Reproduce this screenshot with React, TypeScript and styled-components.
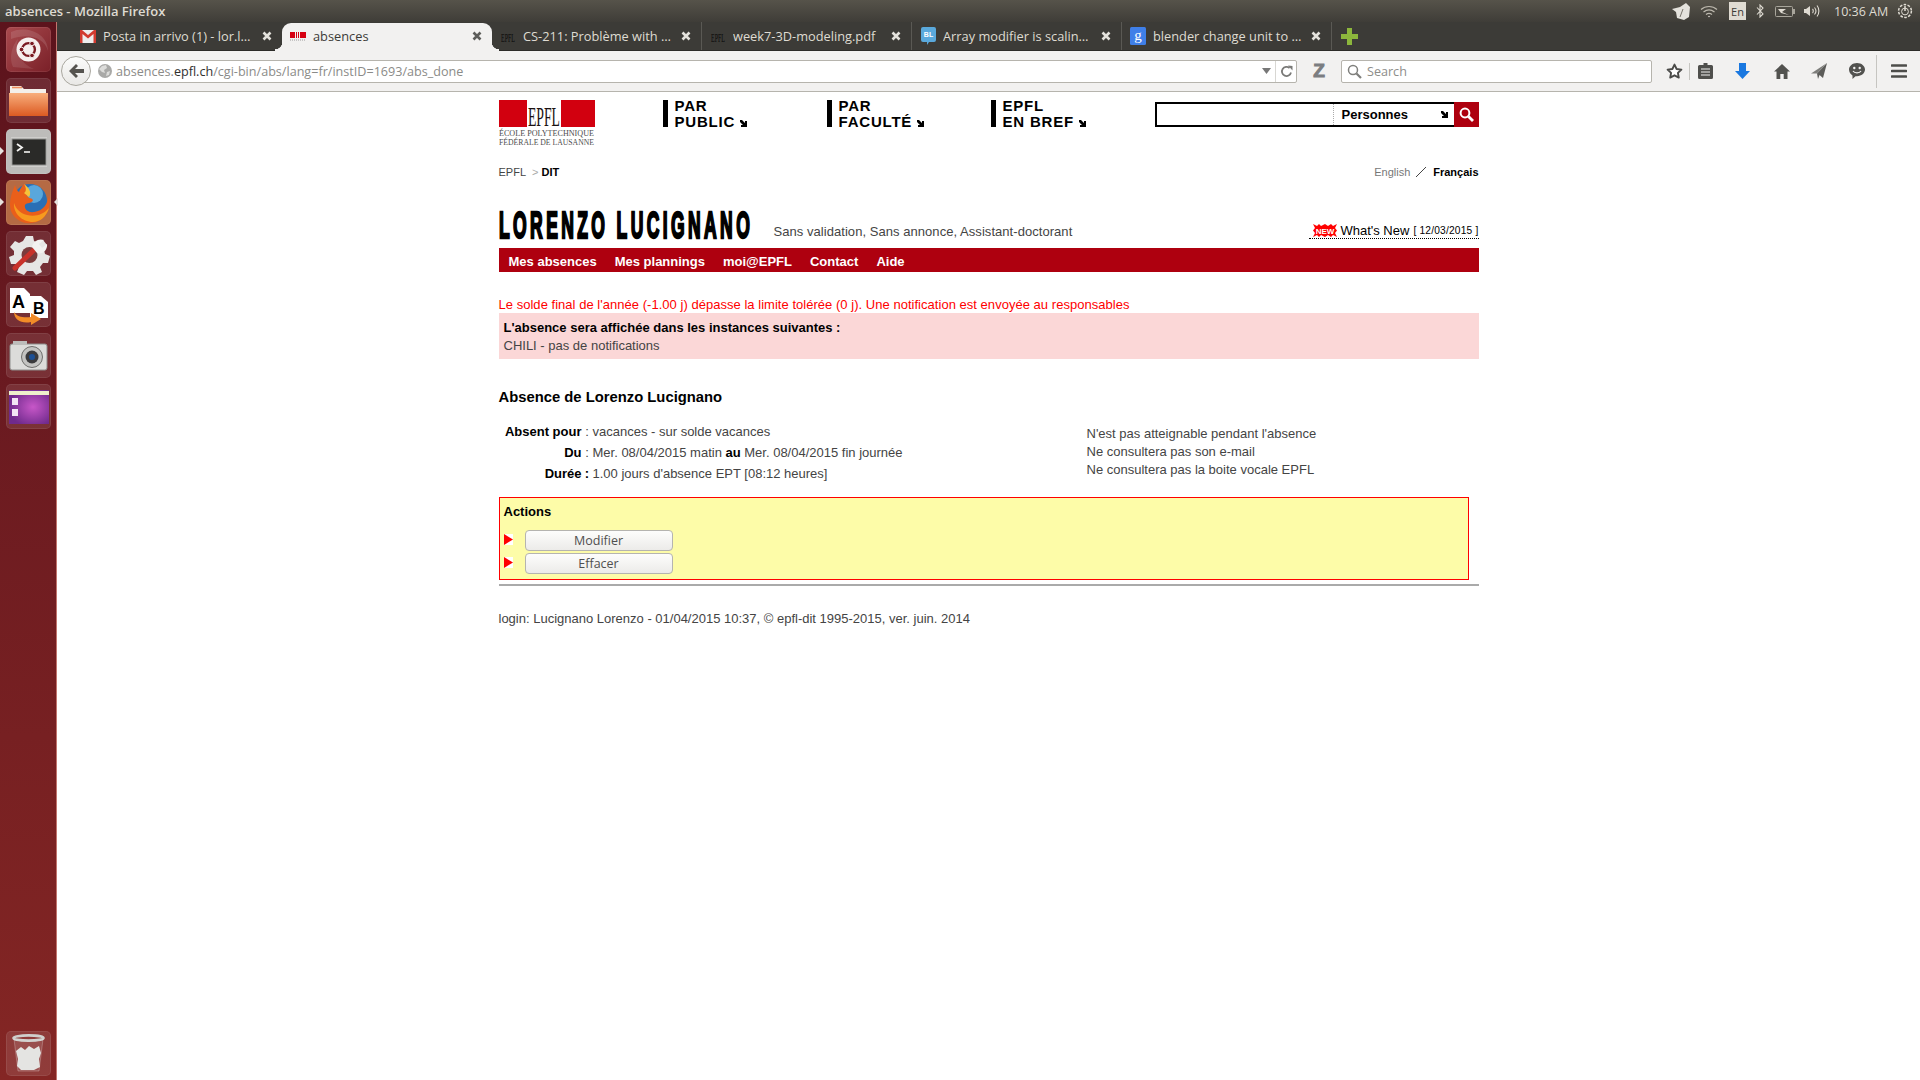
import React from 'react';
import styled, { createGlobalStyle } from 'styled-components';

const GlobalStyle = createGlobalStyle`
  html, body {
    margin: 0;
    padding: 0;
    background: #fff;
    overflow: hidden;
  }
  * {
    box-sizing: border-box;
  }
`;

const uiFont = `"Open Sans", "Noto Sans", sans-serif`;
const pageFont = `"Liberation Sans", Arial, sans-serif`;

const Screen = styled.div`
  width: 1920px;
  height: 1080px;
  display: flex;
  flex-direction: column;
  overflow: hidden;
`;

const TopPanel = styled.div`
  height: 22px;
  flex: none;
  display: flex;
  align-items: center;
  justify-content: space-between;
  padding-left: 5px;
  background: linear-gradient(#56534a, #3f3d38);
  color: #dfdbd2;
  font: 600 13px ${uiFont};
`;

const Tray = styled.div`
  display: flex;
  align-items: center;
  height: 22px;
  padding-right: 7px;
`;

const TrayItem = styled.span<{ $w: number; $ml: number }>`
  width: ${(p) => p.$w}px;
  margin-left: ${(p) => p.$ml}px;
  display: flex;
  align-items: center;
  justify-content: center;
  flex: none;
  height: 18px;
`;

const LangBox = styled(TrayItem)`
  background: #dfdbd2;
  color: #3c3b37;
  font: 400 11px ${uiFont};
`;

const Clock = styled.span`
  width: 54px;
  margin-left: 14px;
  font: 400 12.5px ${uiFont};
  color: #dfdbd2;
  white-space: nowrap;
`;

const Desktop = styled.div`
  flex: 1;
  display: flex;
  min-height: 0;
`;

const Launcher = styled.nav`
  width: 57px;
  flex: none;
  padding: 5px 0 4px 6px;
  display: flex;
  flex-direction: column;
  gap: 6px;
  background: linear-gradient(#5c131c, #6a1a20 35%, #842624);
  border-right: 1px solid #c2756e;
`;

const Tile = styled.div<{ $bg?: string; $push?: boolean }>`
  width: 45px;
  height: 45px;
  flex: none;
  border-radius: 5px;
  background: ${(p) => p.$bg ?? 'rgba(255, 255, 255, 0.1)'};
  box-shadow: inset 0 0 0 1px rgba(255, 255, 255, 0.08);
  margin-top: ${(p) => (p.$push ? 'auto' : '0')};
  position: relative;
  svg {
    display: block;
  }
`;

const Pip = styled.i<{ $side: 'left' | 'right' }>`
  position: absolute;
  top: 18px;
  ${(p) => (p.$side === 'left' ? 'left: -6px;' : 'right: -7px;')}
  width: 0;
  height: 0;
  border-top: 4px solid transparent;
  border-bottom: 4px solid transparent;
  ${(p) =>
    p.$side === 'left' ? 'border-left: 4px solid #e6e2de;' : 'border-right: 4px solid #e6e2de;'}
`;

const Browser = styled.div`
  flex: 1;
  min-width: 0;
  display: flex;
  flex-direction: column;
`;

const TabStrip = styled.div`
  height: 29px;
  flex: none;
  display: flex;
  align-items: stretch;
  padding-left: 15px;
  background: #3c3b37;
  border-bottom: 1px solid #2c2b28;
`;

const Tab = styled.div<{ $active?: boolean; $sep?: boolean }>`
  width: 210px;
  flex: none;
  display: flex;
  align-items: center;
  padding: ${(p) => (p.$active ? '0 10px 2px 8px' : '0 10px 0 8px')};
  position: relative;
  font: 400 12.8px ${uiFont};
  color: ${(p) => (p.$active ? '#3c3b37' : '#dfdbd2')};
  background: ${(p) => (p.$active ? '#f2f1f0' : 'transparent')};
  border-radius: ${(p) => (p.$active ? '9px 9px 0 0' : '0')};
  margin-top: ${(p) => (p.$active ? '1px' : '0')};
  margin-bottom: ${(p) => (p.$active ? '-1px' : '0')};
  border-right: ${(p) => (p.$sep ? '1px solid #5a5954' : '0')};
  ${(p) =>
    p.$active &&
    `
    &::before, &::after {
      content: '';
      position: absolute;
      bottom: 0;
      width: 7px;
      height: 9px;
    }
    &::before {
      left: -7px;
      background: radial-gradient(circle at 0 0, transparent 7px, #f2f1f0 7.5px);
    }
    &::after {
      right: -7px;
      background: radial-gradient(circle at 100% 0, transparent 7px, #f2f1f0 7.5px);
    }
  `}
`;

const TabIcon = styled.span`
  width: 16px;
  height: 16px;
  flex: none;
  margin-right: 7px;
  display: flex;
  align-items: center;
  justify-content: center;
`;

const TabLabel = styled.span`
  flex: 1;
  white-space: nowrap;
  overflow: hidden;
`;

const PlusButton = styled.div`
  display: flex;
  align-items: center;
  margin-left: 9px;
`;

const Toolbar = styled.div`
  height: 41px;
  flex: none;
  display: flex;
  align-items: center;
  padding-left: 4px;
  background: #f2f1f0;
  border-bottom: 1px solid #b6b4ad;
  color: #4a4a4a;
`;

const BackButton = styled.div`
  width: 30px;
  height: 30px;
  flex: none;
  border-radius: 50%;
  background: linear-gradient(#fbfbfa, #e9e8e6);
  border: 1px solid #a9a79f;
  display: flex;
  align-items: center;
  justify-content: center;
  position: relative;
  z-index: 1;
`;

const Field = styled.div`
  height: 23px;
  display: flex;
  align-items: center;
  background: #fff;
  border: 1px solid #b6b4ad;
  border-radius: 2px;
  font: 400 12.6px ${uiFont};
`;

const UrlBar = styled(Field)`
  flex: 1;
  min-width: 0;
  margin-left: -15px;
  padding-left: 21px;
`;

const UrlText = styled.span`
  flex: 1;
  margin-left: 4px;
  color: #8b8b88;
  white-space: nowrap;
  b {
    font-weight: 400;
    color: #2f2f2f;
  }
`;

const ReloadBox = styled.span`
  width: 21px;
  height: 21px;
  display: flex;
  align-items: center;
  justify-content: center;
  margin-left: 4px;
  border-left: 1px solid #d8d7d3;
`;

const AddonMark = styled.span`
  width: 44px;
  flex: none;
  text-align: center;
  font: 700 19px ${pageFont};
  color: #7b7d80;
  -webkit-text-stroke: 1px #7b7d80;
`;

const SearchField = styled(Field)`
  width: 311px;
  flex: none;
  padding-left: 5px;
  color: #8d8d8a;
  gap: 5px;
`;

const ToolIcon = styled.span<{ $w: number; $ml?: number }>`
  width: ${(p) => p.$w}px;
  margin-left: ${(p) => p.$ml ?? 0}px;
  flex: none;
  display: flex;
  align-items: center;
  justify-content: center;
`;

const ToolSep = styled.span<{ $h: number }>`
  width: 1px;
  height: ${(p) => p.$h}px;
  flex: none;
  background: #c6c5c1;
`;

const Page = styled.main`
  flex: 1;
  background: #fff;
  padding-top: 8px;
  font: 400 13px ${pageFont};
  color: #444;
`;

const Wrap = styled.div`
  width: 980px;
  margin: 0 auto;
`;

const Header = styled.header`
  height: 47px;
  display: flex;
  align-items: flex-start;
`;

const Logo = styled.svg`
  width: 96px;
  height: 47px;
  flex: none;
  margin-right: 68px;
`;

const MainLink = styled.a`
  width: 164px;
  height: 27px;
  flex: none;
  border-left: 5px solid #000;
  padding-left: 7px;
  font: 700 15px/16px ${pageFont};
  letter-spacing: 0.8px;
  color: #000;
  white-space: nowrap;
  svg {
    margin-left: 5px;
  }
`;

const MainLinkText = styled.span`
  display: block;
  margin-top: -2px;
`;

const SearchBox = styled.form`
  width: 324px;
  height: 25px;
  margin: 2px 0 0 auto;
  display: flex;
  border: 2px solid #000;
  border-right: 0;
`;

const SearchInput = styled.div`
  width: 177px;
  flex: none;
  border-right: 1px dotted #aaa;
`;

const SearchSelect = styled.div`
  flex: 1;
  display: flex;
  align-items: center;
  padding-left: 8px;
  font: 700 13px ${pageFont};
  color: #000;
  svg {
    margin-left: auto;
    margin-right: 6px;
  }
`;

const SearchGo = styled.button`
  width: 25px;
  height: 25px;
  margin: -2px 0;
  flex: none;
  padding: 0;
  border: 0;
  background: #ae000f;
  display: flex;
  align-items: center;
  justify-content: center;
`;

const CrumbBar = styled.div`
  height: 14px;
  margin-top: 18px;
  display: flex;
  align-items: center;
  font-size: 11px;
  line-height: 14px;
  color: #444;
`;

const CrumbArrow = styled.span`
  color: #aaa;
  margin: 0 3px 0 6px;
`;

const Strong = styled.b`
  color: #000;
`;

const LangSwitch = styled.div`
  margin-left: auto;
  display: flex;
  align-items: center;
  color: #777;
  svg {
    margin: 0 7px 0 6px;
  }
`;

const TitleRow = styled.div`
  height: 44px;
  margin-top: 25px;
  display: flex;
  align-items: flex-end;
  padding-bottom: 9px;
`;

const Title = styled.h1`
  width: 275px;
  height: 26px;
  flex: none;
  margin: 0;
  font: 700 36px/26px ${pageFont};
  color: #000;
  white-space: nowrap;
`;

// no Impact-like face is installed, so the bold face gets squeezed to that shape
const TitleText = styled.span`
  display: inline-block;
  letter-spacing: 7px;
  -webkit-text-stroke: 2.4px #000;
  transform: scaleX(0.486);
  transform-origin: 0 50%;
`;

const Subtitle = styled.span`
  font-size: 13px;
  line-height: 15px;
  letter-spacing: 0.05px;
  color: #444;
`;

const WhatsNew = styled.a`
  margin-left: auto;
  display: flex;
  align-items: center;
  height: 16px;
  padding-left: 4px;
  border-bottom: 1px dotted #000;
  color: #000;
  font-size: 13px;
  white-space: nowrap;
  svg {
    margin-right: 3px;
  }
`;

const NewsDate = styled.small`
  font-size: 10.2px;
  margin-left: 4px;
  letter-spacing: 0.2px;
`;

const RedNav = styled.nav`
  height: 24px;
  display: flex;
  align-items: center;
  gap: 18px;
  padding: 2px 0 0 10px;
  background: #ae000f;
  color: #fff;
  font-weight: 700;
  font-size: 13px;
`;

const ErrorLine = styled.p`
  margin: 25px 0 0;
  line-height: 16px;
  letter-spacing: 0.03px;
  color: #f00;
`;

const Notice = styled.div`
  height: 46px;
  padding: 6px 5px 0;
  background: #fbd7d7;
  line-height: 18px;
  color: #444;
  b {
    display: block;
    color: #000;
  }
`;

const Heading = styled.h2`
  margin: 29px 0 0;
  font: 700 14.8px/18px ${pageFont};
  color: #000;
`;

const Details = styled.div`
  margin-top: 15px;
  display: flex;
  height: 63px;
`;

const DetailCol = styled.div`
  width: 588px;
  flex: none;
`;

const DetailRow = styled.div`
  height: 21px;
  display: flex;
  align-items: center;
  b {
    color: #000;
  }
`;

const DetailLabel = styled.b`
  width: 83px;
  flex: none;
  text-align: right;
  white-space: nowrap;
`;

const Colon = styled.span`
  width: 11px;
  flex: none;
  text-align: center;
`;

const Remarks = styled.div`
  padding-top: 4px;
  line-height: 18px;
`;

const ActionsBox = styled.section`
  width: 970px;
  height: 83px;
  margin-top: 13px;
  padding: 6px 4px 0;
  background: #fdfca8;
  border: 1px solid #f00;
`;

const ActionsTitle = styled.div`
  font-weight: 700;
  line-height: 16px;
  color: #000;
  margin-bottom: 10px;
`;

const ActionRow = styled.div`
  height: 21px;
  margin-bottom: 2px;
  display: flex;
  align-items: center;
  gap: 12px;
  svg {
    margin-top: -2px;
  }
`;

const ActionButton = styled.button`
  width: 148px;
  height: 21px;
  padding: 0;
  border: 1px solid #b5b4b0;
  border-radius: 4px;
  background: linear-gradient(#fdfdfc, #ecebe9);
  font: 400 12.5px ${uiFont};
  color: #4f4f4f;
`;

const Rule = styled.hr`
  margin: 4px 0 0;
  height: 2px;
  border: 0;
  background: #aaa;
`;

const Footer = styled.p`
  margin: 24px 0 0;
  line-height: 18px;
  color: #444;
`;

const CloseIcon = ({ color }: { color: string }) => (
  <svg width="10" height="10" viewBox="0 0 10 10">
    <path d="M1.5 1.5 8.5 8.5M8.5 1.5 1.5 8.5" stroke={color} strokeWidth="2.6" />
  </svg>
);

const CornerArrow = ({ size = 7 }: { size?: number }) => (
  <svg width={size} height={size} viewBox="0 0 7 7">
    <path d="M0 0H2L5 3V1H7V7H1V5H3L0 2Z" fill="#000" />
  </svg>
);

const EpflFavicon = () => (
  <svg width="16" height="16" viewBox="0 0 16 16">
    <text x="1" y="7" fontFamily="Liberation Serif" fontSize="6.5" textLength="14" lengthAdjust="spacingAndGlyphs" fill="#0a0a0a" transform="scale(1 2)">
      EPFL
    </text>
  </svg>
);

const GmailIcon = () => (
  <svg width="16" height="13" viewBox="0 0 16 13">
    <rect width="16" height="13" fill="#eee" />
    <path d="M0 0H2L8 5 14 0H16V13H13.5V4L8 8.5 2.5 4V13H0Z" fill="#d23b30" />
  </svg>
);

const BarIcon = () => (
  <svg width="16" height="16" viewBox="0 0 16 16">
    <path d="M0 4H5V10H0ZM6 4H7V10H6ZM8 4H9V10H8ZM10 4H16V10H10Z" fill="#d60012" />
    <path d="M0 12H16" stroke="#999" strokeWidth="1" strokeDasharray="1 1" />
  </svg>
);

const BubbleIcon = () => (
  <svg width="15" height="18" viewBox="0 0 15 18">
    <path d="M2 0H13A2 2 0 0 1 15 2V13A2 2 0 0 1 13 15H8L6 18V15H2A2 2 0 0 1 0 13V2A2 2 0 0 1 2 0Z" fill="#5aa9dc" />
    <text x="7.5" y="9.5" textAnchor="middle" fontFamily="Liberation Sans" fontWeight="700" fontSize="7" fill="#fff">
      BL
    </text>
  </svg>
);

const GoogleIcon = () => (
  <svg width="16" height="18" viewBox="0 0 16 18">
    <rect width="16" height="18" rx="1.5" fill="#3f7fe8" />
    <text x="8" y="13" textAnchor="middle" fontFamily="Liberation Serif" fontSize="15" fill="#fff">
      g
    </text>
  </svg>
);

const tabs = [
  { label: 'Posta in arrivo (1) - lor.l…', icon: <GmailIcon /> },
  { label: 'absences', icon: <BarIcon />, active: true },
  { label: 'CS-211: Problème with …', icon: <EpflFavicon />, sep: true },
  { label: 'week7-3D-modeling.pdf', icon: <EpflFavicon />, sep: true },
  { label: 'Array modifier is scalin…', icon: <BubbleIcon />, sep: true },
  { label: 'blender change unit to …', icon: <GoogleIcon />, sep: true },
];

const UbuntuIcon = () => (
  <svg width="45" height="45" viewBox="0 0 45 45">
    <path d="M5 5C20 -2 42 6 42 24 38 10 22 6 5 12Z" fill="rgba(255,255,255,.12)" />
    <path d="M7 40C2 28 8 16 12 12 8 24 14 36 28 42Z" fill="rgba(255,255,255,.1)" />
    <circle cx="22.5" cy="22.5" r="12" fill="#f6efee" />
    <circle cx="22.5" cy="22.5" r="6.4" fill="none" stroke="#7a1a22" strokeWidth="2.4" />
    <circle cx="15.5" cy="22.5" r="2.3" fill="#7a1a22" stroke="#f6efee" />
    <circle cx="26" cy="16.5" r="2.3" fill="#7a1a22" stroke="#f6efee" />
    <circle cx="26" cy="28.5" r="2.3" fill="#7a1a22" stroke="#f6efee" />
  </svg>
);

const FilesIcon = () => (
  <svg width="45" height="45" viewBox="0 0 45 45">
    <path d="M4 8H15L18 11H40V22H4Z" fill="#f4f0ea" />
    <path d="M6 9.5H16" stroke="#ef8f5e" strokeWidth="1.6" />
    <path d="M3 15H42V38H3Z" fill="url(#folder)" />
    <defs>
      <linearGradient id="folder" x1="0" y1="0" x2="0" y2="1">
        <stop offset="0" stopColor="#f8ae7c" />
        <stop offset="1" stopColor="#dc5a22" />
      </linearGradient>
    </defs>
  </svg>
);

const TerminalIcon = () => (
  <svg width="45" height="45" viewBox="0 0 45 45">
    <rect x="5" y="8" width="36" height="30" fill="#f0f0ee" opacity=".35" />
    <rect x="6" y="10" width="34" height="26" fill="#2a2a28" stroke="#8f8f8d" />
    <path d="M11 15 16 18.5 11 22" stroke="#f4f4f2" strokeWidth="1.8" fill="none" />
    <path d="M18 23H24" stroke="#f4f4f2" strokeWidth="1.6" />
  </svg>
);

const FirefoxIcon = () => (
  <svg width="45" height="45" viewBox="0 0 45 45">
    <circle cx="24" cy="21" r="17" fill="#2a6fb5" />
    <circle cx="28" cy="14" r="9" fill="#59a7dc" />
    <path d="M9 5C6 13 2 22 5 31 10 44 27 47 37 38 43 33 45 24 43 15 42 24 37 31 28 32 22 33 18 29 19 25 21 22 26 24 27 20 25 17 22 19 21 15 23 10 20 6 18 4 16 6 14 9 13 12 11 11 10 8 9 5Z" fill="#ea5f1a" />
    <path d="M8 23C7 33 16 42 27 42 34 42 40 37 43 28 37 35 29 37 21 35 14 33 10 29 8 23Z" fill="#f79a1e" />
    <path d="M18 13C21 11 20 7 18 4 23 8 26 12 23 17Z" fill="#f6c23a" />
  </svg>
);

const ToolsIcon = () => (
  <svg width="45" height="45" viewBox="0 0 45 45">
    <path d="M20 5H27L28 10 32 12 37 9 41 14 38 19 39 23 44 25 42 32 37 32 34 36 36 41 30 44 27 40H21L18 44 11 41 13 36 10 33 5 33 3 26 8 24V20L4 16 9 10 13 12 17 10Z" fill="#e6e6e4" />
    <circle cx="23.5" cy="24" r="8" fill="#7a3c3c" />
    <path d="M9 37 29 18" stroke="#c8322a" strokeWidth="5" strokeLinecap="round" />
    <path d="M26 16C27 10 33 7 38 9L33 13 36 17 41 13C42 19 36 24 31 22Z" fill="#f2f2f0" />
  </svg>
);

const DictIcon = () => (
  <svg width="45" height="45" viewBox="0 0 45 45">
    <path d="M4 6H18L24 12V31H4Z" fill="#fff" />
    <path d="M24 14H35L42 20V36H24Z" fill="#fff" />
    <text x="6" y="26" fontFamily="Liberation Sans" fontWeight="700" fontSize="18" fill="#000">
      A
    </text>
    <text x="27" y="32" fontFamily="Liberation Sans" fontWeight="700" fontSize="16" fill="#000">
      B
    </text>
    <path d="M8 30C11 35 18 36 25 35V31L35 37 25 43V40C16 42 8 38 8 30Z" fill="#f28c28" />
  </svg>
);

const CameraIcon = () => (
  <svg width="45" height="45" viewBox="0 0 45 45">
    <rect x="4" y="11" width="37" height="26" rx="2" fill="#dcdcda" stroke="#8e8e8c" />
    <rect x="7" y="8" width="14" height="4" fill="#bdbdbb" />
    <circle cx="26" cy="24" r="10.5" fill="#c4c4c2" stroke="#6f6f6d" />
    <circle cx="26" cy="24" r="6.5" fill="#3a3a3c" />
    <circle cx="26" cy="24" r="3" fill="#1c4f93" />
  </svg>
);

const WorkspaceIcon = () => (
  <svg width="45" height="45" viewBox="0 0 45 45">
    <rect x="3" y="6" width="40" height="34" fill="url(#ws)" />
    <rect x="3" y="7" width="40" height="4" fill="#eef0cc" />
    <rect x="6" y="14" width="6" height="7" fill="#f2e4f4" />
    <rect x="6" y="25" width="6" height="7" fill="#f2e4f4" />
    <defs>
      <radialGradient id="ws" cx=".6" cy=".5" r=".6">
        <stop offset="0" stopColor="#c757c8" />
        <stop offset="1" stopColor="#6f2a8c" />
      </radialGradient>
    </defs>
  </svg>
);

const TrashIcon = () => (
  <svg width="45" height="45" viewBox="0 0 45 45">
    <ellipse cx="22.5" cy="7" rx="15" ry="2.6" fill="none" stroke="#cfcfcc" strokeWidth="2.6" />
    <path d="M8 8 12 40H33L37 8" fill="rgba(255,255,255,.1)" stroke="rgba(255,255,255,.25)" />
    <path d="M10 20 15 16 19 19 23 15 28 18 33 15 35 22 33 28 34 36 28 39H15L11 35 12 28Z" fill="#e4e4e2" />
  </svg>
);

const App: React.FC = () => {
  return (
    <Screen>
      <GlobalStyle />
      <TopPanel>
        absences - Mozilla Firefox
        <Tray>
          <TrayItem $w={18} $ml={0}>
            <svg width="18" height="17" viewBox="0 0 18 17">
              <path d="M0 6 8 4 14 0 18 4 17 14 12 17 5 15 4 9Z" fill="#e4e2dc" />
              <path d="M8 14 11 6" stroke="#77746b" strokeWidth="1" />
            </svg>
          </TrayItem>
          <TrayItem $w={20} $ml={9}>
            <svg width="18" height="13" viewBox="0 0 18 13" fill="none" stroke="#bdb9ae" strokeWidth="1.2">
              <path d="M1 4.5C5.5 .5 12.5 .5 17 4.5M3.5 7C6.8 4.4 11.2 4.4 14.5 7M6 9.4C7.8 8.2 10.2 8.2 12 9.4" />
              <circle cx="9" cy="11.5" r=".8" fill="#dfdbd2" stroke="none" />
            </svg>
          </TrayItem>
          <LangBox $w={17} $ml={10}>En</LangBox>
          <TrayItem $w={8} $ml={10}>
            <svg width="8" height="14" viewBox="0 0 8 14" fill="none" stroke="#dfdbd2" strokeWidth="1.1">
              <path d="M1 3.5 7 10 4 13V1L7 4 1 10.5" />
            </svg>
          </TrayItem>
          <TrayItem $w={20} $ml={11}>
            <svg width="20" height="11" viewBox="0 0 20 11">
              <rect x=".5" y=".5" width="17" height="10" rx="1" fill="none" stroke="#a8a59b" />
              <rect x="18" y="3" width="2" height="5" fill="#a8a59b" />
              <path d="M3 3H11L7 6 14 9 6 7Z" fill="#dfdbd2" />
            </svg>
          </TrayItem>
          <TrayItem $w={18} $ml={7}>
            <svg width="17" height="14" viewBox="0 0 17 14" fill="none" stroke="#dfdbd2" strokeWidth="1.1">
              <path d="M1 5H3L7 2V12L3 9H1Z" fill="#dfdbd2" stroke="none" />
              <path d="M9.5 5C10.5 6 10.5 8 9.5 9M11.5 3.5C13.2 5.5 13.2 8.5 11.5 10.5M14 1.5C16.5 4.5 16.5 9.5 14 12.5" />
            </svg>
          </TrayItem>
          <Clock>10:36 AM</Clock>
          <TrayItem $w={16} $ml={9}>
            <svg width="16" height="16" viewBox="0 0 16 16" fill="none" stroke="#dfdbd2">
              <circle cx="8" cy="8" r="6.4" strokeWidth="1.5" strokeDasharray="2.6 1.4" />
              <circle cx="8" cy="8.5" r="3.4" strokeWidth="1" />
              <path d="M8 3V8" strokeWidth="1.5" />
            </svg>
          </TrayItem>
        </Tray>
      </TopPanel>
      <Desktop>
        <Launcher>
          <Tile $bg="linear-gradient(135deg, #a94a4e, #7a2028)"><UbuntuIcon /></Tile>
          <Tile><FilesIcon /></Tile>
          <Tile $bg="#bdbcba"><Pip $side="left" /><TerminalIcon /></Tile>
          <Tile $bg="#b56a44"><Pip $side="left" /><Pip $side="right" /><FirefoxIcon /></Tile>
          <Tile><ToolsIcon /></Tile>
          <Tile><DictIcon /></Tile>
          <Tile><CameraIcon /></Tile>
          <Tile><WorkspaceIcon /></Tile>
          <Tile $push><TrashIcon /></Tile>
        </Launcher>
        <Browser>
          <TabStrip>
            {tabs.map((t) => (
              <Tab key={t.label} $active={t.active} $sep={t.sep}>
                <TabIcon>{t.icon}</TabIcon>
                <TabLabel>{t.label}</TabLabel>
                <CloseIcon color={t.active ? '#5d5d5a' : '#e4e2dc'} />
              </Tab>
            ))}
            <PlusButton>
              <svg width="17" height="17" viewBox="0 0 17 17">
                <path d="M6 0H11V6H17V11H11V17H6V11H0V6H6Z" fill="#8cb63c" />
              </svg>
            </PlusButton>
          </TabStrip>
          <Toolbar>
            <BackButton>
              <svg width="15" height="14" viewBox="0 0 15 14">
                <path d="M7 0 9 2 6 5H15V9H6L9 12 7 14 0 7Z" fill="#55534f" />
              </svg>
            </BackButton>
            <UrlBar>
              <svg width="14" height="14" viewBox="0 0 14 14">
                <circle cx="7" cy="7" r="7" fill="#a9a9a7" />
                <path d="M4 2 8 1 9 4 6 6 7 9 4 8 1 5ZM9 8 12 7 11 11 8 12Z" fill="#dcdcda" />
              </svg>
              <UrlText>
                absences.<b>epfl.ch</b>/cgi-bin/abs/lang=fr/instID=1693/abs_done
              </UrlText>
              <svg width="9" height="6" viewBox="0 0 9 6">
                <path d="M0 0H9L4.5 6Z" fill="#777" />
              </svg>
              <ReloadBox>
                <svg width="13" height="13" viewBox="0 0 13 13" fill="none">
                  <path d="M11 7.5A4.6 4.6 0 1 1 9.6 3" stroke="#7a7a78" strokeWidth="1.8" />
                  <path d="M8 .5 12.5 1V5.5Z" fill="#7a7a78" />
                </svg>
              </ReloadBox>
            </UrlBar>
            <AddonMark>Z</AddonMark>
            <SearchField>
              <svg width="15" height="15" viewBox="0 0 15 15" fill="none" stroke="#7f7f7c" strokeWidth="1.5">
                <circle cx="6" cy="6" r="4.5" />
                <path d="M9.5 9.5 14 14" strokeWidth="2.2" />
              </svg>
              Search
            </SearchField>
            <ToolIcon $w={29} $ml={8}>
              <svg width="17" height="16" viewBox="0 0 17 16">
                <path d="M8.5 1.6 10.6 6 15.4 6.6 11.9 9.9 12.8 14.6 8.5 12.3 4.2 14.6 5.1 9.9 1.6 6.6 6.4 6Z" fill="#fff" stroke="#4a4a48" strokeWidth="1.9" strokeLinejoin="round" />
              </svg>
            </ToolIcon>
            <ToolSep $h={17} />
            <ToolIcon $w={30}>
              <svg width="15" height="16" viewBox="0 0 15 16">
                <path d="M5.5 0H9.5V2H13.5A1.5 1.5 0 0 1 15 3.5V14.5A1.5 1.5 0 0 1 13.5 16H1.5A1.5 1.5 0 0 1 0 14.5V3.5A1.5 1.5 0 0 1 1.5 2H5.5Z" fill="#4f4f4c" />
                <path d="M3 6H12M3 9H12M3 12H12" stroke="#f2f1f0" strokeWidth="1.2" />
              </svg>
            </ToolIcon>
            <ToolIcon $w={41} $ml={2}>
              <svg width="15" height="16" viewBox="0 0 15 16">
                <path d="M4 0H11V8H15L7.5 16 0 8H4Z" fill="#1a78e0" />
              </svg>
            </ToolIcon>
            <ToolIcon $w={37}>
              <svg width="16" height="15" viewBox="0 0 16 15">
                <path d="M8 0 16 7.5H13.5V15H9.7V10H6.3V15H2.5V7.5H0Z" fill="#52524f" />
              </svg>
            </ToolIcon>
            <ToolIcon $w={38}>
              <svg width="16" height="16" viewBox="0 0 16 16">
                <path d="M16 0 12 15 8.5 12 7 16 6 10.5Z" fill="#5c5c59" />
                <path d="M16 0 0 10.5 6 10.5Z" fill="#7d7d7a" />
              </svg>
            </ToolIcon>
            <ToolIcon $w={38}>
              <svg width="16" height="16" viewBox="0 0 16 16">
                <path d="M8 0C12.5 0 16 2.9 16 6.6S12.5 13.2 8 13.2H6.5L3.5 16V12.4C1.4 11.3 0 9.1 0 6.6 0 2.9 3.5 0 8 0Z" fill="#52524f" />
                <circle cx="5.3" cy="5" r="1.2" fill="#f2f1f0" />
                <circle cx="10.7" cy="5" r="1.2" fill="#f2f1f0" />
                <path d="M4 8C5.5 10.5 10.5 10.5 12 8" stroke="#f2f1f0" strokeWidth="1.2" fill="none" />
              </svg>
            </ToolIcon>
            <ToolSep $h={33} />
            <ToolIcon $w={43}>
              <svg width="16" height="14" viewBox="0 0 16 14">
                <path d="M1 1.5H15M1 7H15M1 12.5H15" stroke="#4d4d4a" strokeWidth="2.6" strokeLinecap="round" />
              </svg>
            </ToolIcon>
          </Toolbar>
          <Page>
            <Wrap>
              <Header>
                <Logo viewBox="0 0 96 47">
                  <rect width="96" height="27" fill="#d2000f" />
                  <rect x="28" width="34" height="27" fill="#fff" />
                  <text x="29" y="15" fontFamily="Liberation Serif" fontSize="16" textLength="32" lengthAdjust="spacingAndGlyphs" fill="#1a1111" transform="scale(1 1.75)">
                    EPFL
                  </text>
                  <text x="0" y="36" fontFamily="Liberation Serif" fontSize="7.5" textLength="95" lengthAdjust="spacingAndGlyphs" fill="#4c4c4c">
                    ÉCOLE POLYTECHNIQUE
                  </text>
                  <text x="0" y="45" fontFamily="Liberation Serif" fontSize="7.5" textLength="95" lengthAdjust="spacingAndGlyphs" fill="#4c4c4c">
                    FÉDÉRALE DE LAUSANNE
                  </text>
                </Logo>
                <MainLink><MainLinkText>PAR<br />PUBLIC<CornerArrow /></MainLinkText></MainLink>
                <MainLink><MainLinkText>PAR<br />FACULTÉ<CornerArrow /></MainLinkText></MainLink>
                <MainLink><MainLinkText>EPFL<br />EN BREF<CornerArrow /></MainLinkText></MainLink>
                <SearchBox>
                  <SearchInput />
                  <SearchSelect>
                    Personnes
                    <CornerArrow />
                  </SearchSelect>
                  <SearchGo type="button" aria-label="Rechercher">
                    <svg width="15" height="15" viewBox="0 0 15 15" fill="none" stroke="#fff">
                      <circle cx="6" cy="6" r="4.4" strokeWidth="2" />
                      <path d="M9.5 9.5 14 14" strokeWidth="2.8" />
                    </svg>
                  </SearchGo>
                </SearchBox>
              </Header>
              <CrumbBar>
                EPFL<CrumbArrow>&gt;</CrumbArrow><Strong>DIT</Strong>
                <LangSwitch>
                  English
                  <svg width="10" height="10" viewBox="0 0 10 10">
                    <path d="M0 10 10 0" stroke="#444" />
                  </svg>
                  <Strong>Français</Strong>
                </LangSwitch>
              </CrumbBar>
              <TitleRow>
                <Title><TitleText>LORENZO LUCIGNANO</TitleText></Title>
                <Subtitle>Sans validation, Sans annonce, Assistant-doctorant</Subtitle>
                <WhatsNew>
                  <svg width="24" height="13" viewBox="0 0 24 13">
                    <path d="M0 0 4 2 6 0 8 2 12 0 15 2 18 0 20 2 24 0 22 4 24 6.500 22 9 24 13 20 11 18 13 15 11 12 13 8 11 6 13 4 11 0 13 2 9 0 6.500 2 4Z" fill="#f00" />
                    <text x="12" y="9.500" textAnchor="middle" fontFamily="Liberation Sans" fontWeight="700" fontSize="8" fill="#fff">
                      NEW
                    </text>
                  </svg>
                  What's New
                  <NewsDate>[ 12/03/2015 ]</NewsDate>
                </WhatsNew>
              </TitleRow>
              <RedNav>
                <span>Mes absences</span>
                <span>Mes plannings</span>
                <span>moi@EPFL</span>
                <span>Contact</span>
                <span>Aide</span>
              </RedNav>
              <ErrorLine>
                Le solde final de l'année (-1.00 j) dépasse la limite tolérée (0 j). Une notification est envoyée au responsables
              </ErrorLine>
              <Notice>
                <b>L'absence sera affichée dans les instances suivantes :</b>
                CHILI - pas de notifications
              </Notice>
              <Heading>Absence de Lorenzo Lucignano</Heading>
              <Details>
                <DetailCol>
                  <DetailRow>
                    <DetailLabel>Absent pour</DetailLabel>
                    <Colon>:</Colon>
                    vacances - sur solde vacances
                  </DetailRow>
                  <DetailRow>
                    <DetailLabel>Du</DetailLabel>
                    <Colon>:</Colon>
                    <span>Mer. 08/04/2015 matin <b>au</b> Mer. 08/04/2015 fin journée</span>
                  </DetailRow>
                  <DetailRow>
                    <DetailLabel>Durée</DetailLabel>
                    <Colon><b>:</b></Colon>
                    1.00 jours d'absence EPT [08:12 heures]
                  </DetailRow>
                </DetailCol>
                <Remarks>
                  N'est pas atteignable pendant l'absence<br />
                  Ne consultera pas son e-mail<br />
                  Ne consultera pas la boite vocale EPFL
                </Remarks>
              </Details>
              <ActionsBox>
                <ActionsTitle>Actions</ActionsTitle>
                {['Modifier', 'Effacer'].map((label) => (
                  <ActionRow key={label}>
                    <svg width="9" height="11" viewBox="0 0 9 11">
                      <rect width="9" height="11" fill="#fff" />
                      <path d="M0 0 9 5.5 0 11Z" fill="#f00" />
                    </svg>
                    <ActionButton type="button">{label}</ActionButton>
                  </ActionRow>
                ))}
              </ActionsBox>
              <Rule />
              <Footer>login: Lucignano Lorenzo - 01/04/2015 10:37, © epfl-dit 1995-2015, ver. juin. 2014</Footer>
            </Wrap>
          </Page>
        </Browser>
      </Desktop>
    </Screen>
  );
};

export default App;
